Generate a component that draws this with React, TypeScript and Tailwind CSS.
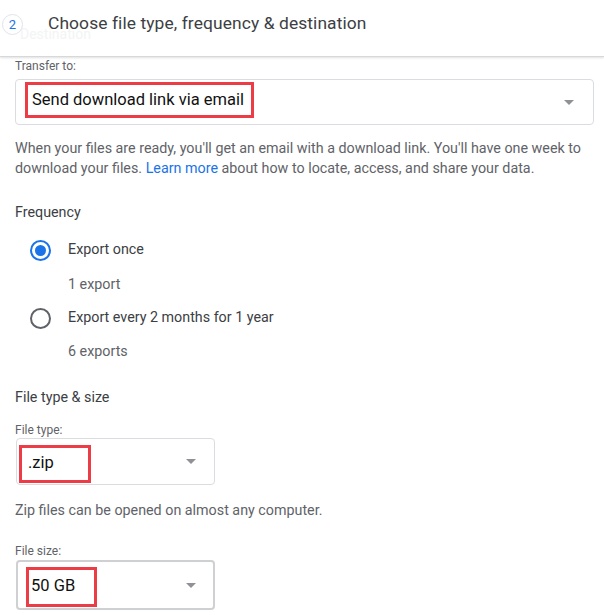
import React from "react";

const Caret = () => (
  <svg width="10" height="5" viewBox="0 0 10 5" className="shrink-0">
    <path d="M0 0 L10 0 L5 5 Z" fill="#8f9194" />
  </svg>
);

function Radio({ checked }: { checked: boolean }) {
  return checked ? (
    <div className="w-[21px] h-[21px] rounded-full border-2 border-[#1a73e8] flex items-center justify-center">
      <div className="w-[11px] h-[11px] rounded-full bg-[#1a73e8]" />
    </div>
  ) : (
    <div className="w-[21px] h-[21px] rounded-full border-2 border-[#5f6368]" />
  );
}

export default function App() {
  return (
    <div
      className="w-[604px] h-[615px] bg-white overflow-hidden relative"
      style={{ fontFamily: "Roboto, 'Liberation Sans', sans-serif" }}
    >
      {/* header */}
      <div className="relative h-[57px] border-b border-[#d7d8da] shadow-[0_1px_2px_rgba(0,0,0,0.12)] bg-white">
        <div className="absolute left-[20px] top-[24px] text-[14px] text-[#f3f4f5]">Destination</div>
        <div className="relative flex items-center h-[47px]">
          <div className="ml-[2px] w-[21px] h-[21px] rounded-full border border-[#dfe3ea] bg-white flex items-center justify-center text-[13px] text-[#1a73e8] mt-[2px]">
            2
          </div>
          <div className="ml-[25px] text-[17.4px] text-[#3c4043] tracking-[0.1px]">
            Choose file type, frequency &amp; destination
          </div>
        </div>
      </div>

      <div className="px-[15px] flex flex-col">
        <div className="text-[12px] text-[#5f6368] mt-[2px] leading-[14px]">Transfer to:</div>
        <div className="mt-[6px] h-[46px] w-[579px] border border-[#dadce0] rounded-[4px] flex items-center pl-[9px] pr-[19px]">
          <div className="border-[3px] border-[#ec3c46] h-[36px] w-[229px] flex items-center pl-[4px] text-[16.5px] text-[#111] mt-[-4px]">
            Send download link via email
          </div>
          <div className="flex-1" />
          <Caret />
        </div>

        <p className="mt-[13px] text-[14.3px] leading-[20px] text-[#5f6368]">
          When your files are ready, you'll get an email with a download link. You'll have one week to download your files.{" "}
          <span className="text-[#1a73e8]">Learn more</span> about how to locate, access, and share your data.
        </p>

        <div className="mt-[24px] text-[14.3px] leading-[20px] text-[#3c4043]">Frequency</div>

        <div className="mt-[17px] flex items-center h-[22px]">
          <div className="ml-[15px]">
            <Radio checked />
          </div>
          <div className="ml-[17px] text-[14.3px] text-[#3c4043]">Export once</div>
        </div>
        <div className="mt-[13px] ml-[53px] text-[14.3px] leading-[20px] text-[#5f6368]">1 export</div>
        <div className="mt-[13px] flex items-center h-[22px]">
          <div className="ml-[15px]">
            <Radio checked={false} />
          </div>
          <div className="ml-[17px] text-[14.3px] text-[#3c4043]">Export every 2 months for 1 year</div>
        </div>
        <div className="mt-[12px] ml-[53px] text-[14.3px] leading-[20px] text-[#5f6368]">6 exports</div>

        <div className="mt-[26px] text-[14.3px] leading-[20px] text-[#3c4043]">File type &amp; size</div>

        <div className="mt-[16px] text-[12px] leading-[14px] text-[#5f6368]">File type:</div>
        <div className="mt-[1px] ml-[1px] h-[47px] w-[199px] border border-[#dadce0] rounded-[4px] flex items-center pl-[2px] pr-[18px]">
          <div className="border-[3px] border-[#ec3c46] h-[38px] w-[72px] flex items-center pl-[6px] text-[16.5px] text-[#111] mt-[4px]">
            .zip
          </div>
          <div className="flex-1" />
          <Caret />
        </div>

        <div className="mt-[15px] text-[14.3px] leading-[20px] text-[#5f6368]">Zip files can be opened on almost any computer.</div>

        <div className="mt-[24px] text-[12px] leading-[14px] text-[#5f6368]">File size:</div>
        <div className="mt-[2px] ml-[1px] h-[50px] w-[199px] border-2 border-[#cfd0d2] rounded-[4px] flex items-center pl-[8px] pr-[17px]">
          <div className="border-[3px] border-[#ec3c46] h-[40px] w-[71px] flex items-center pl-[2px] text-[16.5px] text-[#111] mt-[3px]">
            50 GB
          </div>
          <div className="flex-1" />
          <Caret />
        </div>
      </div>
    </div>
  );
}
